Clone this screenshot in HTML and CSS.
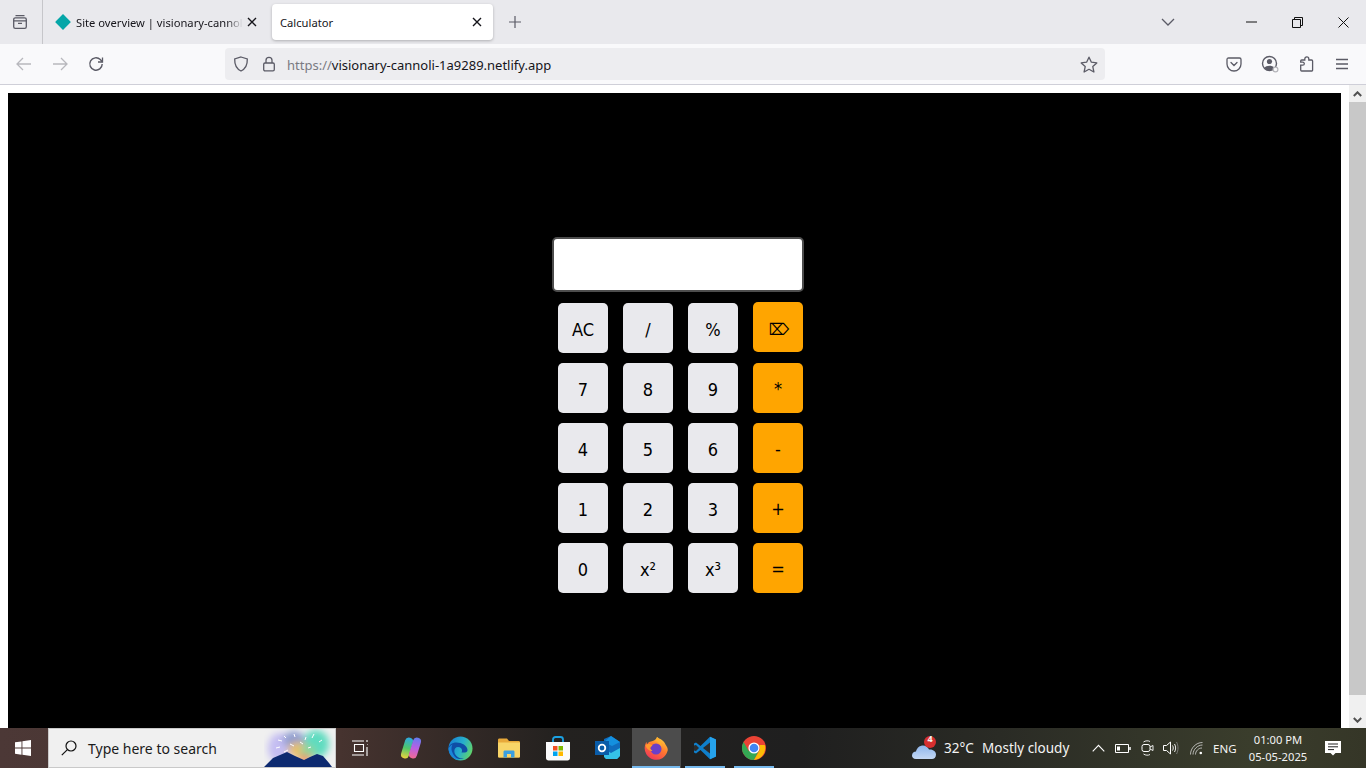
FILE: index.html
```html
<!DOCTYPE html>
<html lang="en">
<head>
<meta charset="utf-8">
<title>Calculator</title>
<link rel="stylesheet" href="styles.css">
</head>
<body>
<div class="tabstrip">
  <div class="tab-manager">
    <svg class="ico" width="16" height="16" viewBox="0 0 16 16" fill="none" stroke="#5b5b66" stroke-width="1.3"><path d="M3.5 1.7h9M1.7 5.5c0-1 .7-1.6 1.6-1.6h9.4c.9 0 1.6.6 1.6 1.6v7.2c0 1-.7 1.6-1.6 1.6H3.3c-.9 0-1.6-.6-1.6-1.6z"/><path d="M1.7 6.800h12.600M6 9.300h4"/></svg>
  </div>
  <div class="tab tab-idle">
    <svg class="tab-favicon" width="16" height="16" viewBox="0 0 16 16"><path d="M8 0l7.4 7.4a.9.9 0 0 1 0 1.2L8 16 .6 8.6a.9.9 0 0 1 0-1.2z" fill="#05a6a8"/></svg>
    <span class="tab-title">Site overview | visionary-cannoli</span>
    <svg class="tab-close" width="10" height="10" viewBox="0 0 10 10" stroke="#15141a" stroke-width="1.4"><path d="M1 1l8 8M9 1l-8 8"/></svg>
  </div>
  <div class="tab tab-active">
    <span class="tab-title">Calculator</span>
    <svg class="tab-close" width="10" height="10" viewBox="0 0 10 10" stroke="#15141a" stroke-width="1.4"><path d="M1 1l8 8M9 1l-8 8"/></svg>
  </div>
  <div class="new-tab">
    <svg width="14" height="14" viewBox="0 0 14 14" stroke="#5b5b66" stroke-width="1.2"><path d="M7 1v12M1 7h12"/></svg>
  </div>
  <div class="grow"></div>
  <div class="tabs-menu">
    <svg width="14" height="8" viewBox="0 0 14 8" fill="none" stroke="#5b5b66" stroke-width="1.3"><path d="M1 1l6 6 6-6"/></svg>
  </div>
  <div class="win-btn">
    <svg width="11" height="2" viewBox="0 0 11 2" stroke="#111" stroke-width="1"><path d="M0 1h11"/></svg>
  </div>
  <div class="win-btn">
    <svg width="11" height="11" viewBox="0 0 11 11" fill="none" stroke="#111" stroke-width="1"><path d="M.5 2.5h8v8h-8zM2.5 2.5V.5h8v8H8.500"/></svg>
  </div>
  <div class="win-btn">
    <svg width="11" height="11" viewBox="0 0 11 11" stroke="#111" stroke-width="1"><path d="M.5.5l10 10M10.500.5l-10 10"/></svg>
  </div>
</div>

<div class="toolbar">
  <div class="tool-btn">
    <svg width="16" height="14" viewBox="0 0 16 14" fill="none" stroke="#b8b8bd" stroke-width="1.3"><path d="M15 7H1.500M7 1L1 7l6 6"/></svg>
  </div>
  <div class="tool-btn">
    <svg width="16" height="14" viewBox="0 0 16 14" fill="none" stroke="#b8b8bd" stroke-width="1.3"><path d="M1 7h13.500M9 1l6 6-6 6"/></svg>
  </div>
  <div class="tool-btn">
    <svg width="16" height="16" viewBox="0 0 16 16" fill="none" stroke="#5b5b66" stroke-width="1.4"><path d="M14.200 8a6.200 6.200 0 1 1-1.900-4.500L14.500 6"/><path d="M14.500 1.500V6H10" stroke-width="1.300"/></svg>
  </div>
  <div class="urlbar">
    <svg class="url-shield" width="16" height="16" viewBox="0 0 16 16" fill="none" stroke="#5b5b66" stroke-width="1.3"><path d="M8 1l6.300 2c.2 5.500-1.800 9.800-6.300 12C3.500 12.800 1.500 8.500 1.700 3z"/></svg>
    <svg class="url-lock" width="14" height="16" viewBox="0 0 14 16" fill="none" stroke="#5b5b66" stroke-width="1.300"><rect x="1.700" y="7" width="10.600" height="7.800" rx="1.300"/><path d="M4 7V4.300a3 3 0 0 1 6 0V7"/></svg>
    <span class="url-text"><span class="url-dim">https://</span>visionary-cannoli-1a9289.netlify.app</span>
    <div class="grow"></div>
    <svg class="url-star" width="18" height="17" viewBox="0 0 18 17" fill="none" stroke="#5b5b66" stroke-width="1.300"><path d="M9 1.200l2.400 5 5.400.7-4 3.700 1.100 5.400L9 13.300 4.100 16l1.100-5.400-4-3.700 5.400-.7z" stroke-linejoin="round"/></svg>
  </div>
  <div class="grow"></div>
  <div class="tool-btn">
    <svg width="16" height="15" viewBox="0 0 16 15" fill="none" stroke="#5b5b66" stroke-width="1.300"><path d="M1 2.500C1 1.500 1.600 1 2.500 1h11c.9 0 1.500.5 1.500 1.500V7A7 7 0 0 1 1 7z"/><path d="M5 5.500l3 3 3-3" stroke-linecap="round"/></svg>
  </div>
  <div class="tool-btn">
    <svg width="18" height="18" viewBox="0 0 18 18" fill="none"><circle cx="8.500" cy="8.500" r="7" stroke="#5b5b66" stroke-width="1.400"/><circle cx="8.500" cy="6.500" r="2.600" fill="#5b5b66"/><path d="M3.500 13c1-3 9-3 10 0l-2 2h-6z" fill="#5b5b66"/><circle cx="14.500" cy="14.500" r="2.400" fill="#f9f9fb" stroke="#b5b5ba" stroke-width="1.200"/></svg>
  </div>
  <div class="tool-btn tool-ext">
    <svg width="16" height="16" viewBox="0 0 16 16" fill="none" stroke="#5b5b66" stroke-width="1.300"><path d="M1.700 9.200h2.100a1.500 1.500 0 0 0 0-3H1.700V5c0-.6.400-1 1-1h3.100V2.900a2 2 0 0 1 4 0V4h2.800c.6 0 1 .4 1 1v9.300c0 .4-.3.700-.7.700H2.700c-.6 0-1-.4-1-1z"/></svg>
  </div>
  <div class="tool-btn">
    <svg width="14" height="12" viewBox="0 0 14 12" stroke="#5b5b66" stroke-width="1.300"><path d="M1 1.500h12M1 6h12M1 10.500h12"/></svg>
  </div>
</div>

<div class="viewport">
  <main class="page">
    <div class="calc">
      <input class="display" type="text" aria-label="Result">
      <div class="keys">
        <button class="key">AC</button>
        <button class="key">/</button>
        <button class="key">%</button>
        <button class="key op op-top">&#x2326;</button>
        <button class="key">7</button>
        <button class="key">8</button>
        <button class="key">9</button>
        <button class="key op">*</button>
        <button class="key">4</button>
        <button class="key">5</button>
        <button class="key">6</button>
        <button class="key op">-</button>
        <button class="key">1</button>
        <button class="key">2</button>
        <button class="key">3</button>
        <button class="key op">+</button>
        <button class="key">0</button>
        <button class="key">x²</button>
        <button class="key">x³</button>
        <button class="key op">=</button>
      </div>
    </div>
  </main>
  <div class="scrollbar">
    <div class="scroll-arrow">
      <svg width="9" height="6" viewBox="0 0 9 6" fill="none" stroke="#505050" stroke-width="2"><path d="M.8 5l3.700-3.700L8.200 5"/></svg>
    </div>
    <div class="scroll-thumb"></div>
    <div class="grow"></div>
    <div class="scroll-arrow">
      <svg width="9" height="6" viewBox="0 0 9 6" fill="none" stroke="#505050" stroke-width="2"><path d="M.8 1l3.700 3.700L8.200 1"/></svg>
    </div>
  </div>
</div>

<footer class="taskbar">
  <div class="start">
    <svg width="16" height="16" viewBox="0 0 16 16" fill="#fff"><path d="M0 2.300l6.500-.9v6.200H0zM7.400 1.300L16 0v7.600H7.400zM0 8.500h6.500v6.200L0 13.700zM7.400 8.500H16V16l-8.600-1.200z"/></svg>
  </div>
  <div class="search">
    <svg class="search-glass" width="16" height="16" viewBox="0 0 16 16" fill="none" stroke="#111" stroke-width="1.200"><circle cx="10" cy="6" r="5"/><path d="M6.400 9.600L.8 15.200"/></svg>
    <span class="search-text">Type here to search</span>
    <svg class="search-art" width="71" height="39" viewBox="0 0 71 39">
      <defs>
        <filter id="soft" x="-20%" y="-20%" width="140%" height="140%"><feGaussianBlur stdDeviation="3.500"/></filter>
        <clipPath id="artClip"><rect width="71" height="39"/></clipPath>
      </defs>
      <g clip-path="url(#artClip)">
        <g filter="url(#soft)">
          <ellipse cx="16" cy="20" rx="12" ry="15" fill="#c4bdf2"/>
          <ellipse cx="52" cy="16" rx="13" ry="14" fill="#5fdcc0"/>
          <ellipse cx="30" cy="12" rx="11" ry="9" fill="#8f9dd0"/>
          <ellipse cx="34" cy="22" rx="10" ry="8" fill="#e9c06a"/>
          <ellipse cx="44" cy="24" rx="8" ry="7" fill="#8fd49a"/>
          <ellipse cx="41" cy="31" rx="7" ry="4" fill="#f5875a"/>
        </g>
        <path d="M0 39l9-9 7-3 7-3 8 4 9 4 6-3 7-3 6 2 6 7 3 4z" fill="#0d2a70"/>
        <g stroke="#fff" stroke-width="1"><path d="M14 12l4 1M20 8l2 2M30 6l1 3M12 20l4-1M26 16l4 2M42 9l-1 3M50 6l-2 4M36 14l3 2M44 20l3-1M20 24l4-2M55 14l3-2"/></g>
      </g>
    </svg>
  </div>
  <div class="task-cell task-view">
    <svg width="16" height="16" viewBox="0 0 16 16" fill="none" stroke="#fff" stroke-width="1.100"><path d="M0 1h12M2.500 4.500h9v7h-9zM0 15h12M15 0v2M15 4.500h.5M15 7v9" /></svg>
  </div>
  <div class="task-cell">
    <svg width="24" height="24" viewBox="0 0 24 24" fill="none" stroke-linecap="round" stroke-width="8">
      <defs>
        <linearGradient id="copA" gradientUnits="userSpaceOnUse" x1="10" y1="1" x2="5" y2="23"><stop offset="0" stop-color="#2aa8ea"/><stop offset=".5" stop-color="#4fc76a"/><stop offset="1" stop-color="#f6d23a"/></linearGradient>
        <linearGradient id="copB" gradientUnits="userSpaceOnUse" x1="19" y1="1" x2="14" y2="23"><stop offset="0" stop-color="#5c7ff0"/><stop offset=".5" stop-color="#b85fe4"/><stop offset="1" stop-color="#f36a8f"/></linearGradient>
      </defs>
      <path d="M10 5.500L6 18.500" stroke="url(#copA)"/>
      <path d="M18 5.500L14 18.500" stroke="url(#copB)"/>
    </svg>
  </div>
  <div class="task-cell">
    <svg width="25" height="25" viewBox="0 0 25 25">
      <defs>
        <linearGradient id="edgeA" x1="0" y1=".2" x2="1" y2=".6"><stop offset="0" stop-color="#1780d4"/><stop offset=".55" stop-color="#27b0cc"/><stop offset="1" stop-color="#62d46a"/></linearGradient>
      </defs>
      <circle cx="12.500" cy="12.500" r="12" fill="url(#edgeA)"/>
      <path d="M.5 13C.5 9 4 6.500 8.500 6.500c5 0 11 3 11 7.500 0 1.500-1 2.500-2.500 2.500h-3.500c1.500-3-.5-5.500-3.500-5.500-3.500 0-4.500 3.500-3 7 1.500 3 5 5 9 4.500a12 12 0 0 1-15.500-9.500z" fill="#0f4ea6"/>
      <path d="M.5 13c.5-2 2-3.500 4-4.500-1 2-1.500 4.500-.5 7 1 3.500 3.500 6.500 7 8.500A12 12 0 0 1 .5 13z" fill="#1a86d8"/>
    </svg>
  </div>
  <div class="task-cell">
    <svg width="22" height="20" viewBox="0 0 22 20">
      <path d="M0 2c0-1 .5-1.500 1.500-1.500H9L11 3h9.500c1 0 1.500.5 1.500 1.500V18c0 1-.5 1.500-1.500 1.500h-19C.5 19.500 0 19 0 18z" fill="#e8a93a"/>
      <path d="M0 4.500h22V18c0 1-.5 1.500-1.500 1.500h-19C.5 19.500 0 19 0 18z" fill="#f8d568"/>
      <path d="M5.500 19.500V14c0-1 .5-1.500 1.500-1.500h8c1 0 1.500.5 1.500 1.500v5.500h-3.500V16h-4v3.500z" fill="#3a9fe0"/>
    </svg>
  </div>
  <div class="task-cell">
    <svg width="24" height="25" viewBox="0 0 24 25">
      <path d="M7 7V3.500C7 2 8 1 9.500 1h5C16 1 17 2 17 3.500V7" fill="none" stroke="#1ba1e2" stroke-width="1.800"/>
      <path d="M0 6h24v16c0 1.500-1 2.500-2.500 2.500h-19C1 24.500 0 23.500 0 22z" fill="#fbfbfb"/>
      <rect x="7" y="10" width="4.500" height="4.500" fill="#f25022"/>
      <rect x="12.500" y="10" width="4.500" height="4.500" fill="#7fba00"/>
      <rect x="7" y="15.500" width="4.500" height="4.500" fill="#00a4ef"/>
      <rect x="12.500" y="15.500" width="4.500" height="4.500" fill="#ffb900"/>
    </svg>
  </div>
  <div class="task-cell">
    <svg width="25" height="24" viewBox="0 0 25 24">
      <path d="M9 3l7-3 9 6v14l-3 3H11l-2-3z" fill="#0f6cbd"/>
      <path d="M16 0l9 6-8 4-8-4z" fill="#1490df"/>
      <path d="M9 13l7 4 9-5v8l-3 3H11l-2-2z" fill="#35c1e8"/>
      <rect x="0" y="5" width="14" height="14" fill="#0a5ca8"/>
      <circle cx="7" cy="12" r="3.300" fill="none" stroke="#fff" stroke-width="1.800"/>
    </svg>
  </div>
  <div class="task-cell task-active">
    <svg width="24" height="24" viewBox="0 0 24 24">
      <defs>
        <linearGradient id="foxA" x1=".8" y1="0" x2=".2" y2="1"><stop offset="0" stop-color="#ffd53a"/><stop offset=".45" stop-color="#ff7a2e"/><stop offset="1" stop-color="#f0325c"/></linearGradient>
      </defs>
      <path d="M13 1c2.500 2 7 3 8.500 7.500C24 12 24 14 23.500 15A11.500 11.500 0 1 1 1 9.500C1.300 8 2 6.500 2.500 6l.5 2.500C4 6.500 5.500 5.500 7 5.500 9 5 12 4 13 1z" fill="url(#foxA)"/>
      <circle cx="12" cy="13" r="5.500" fill="#6a3fc8"/>
      <path d="M1.500 9c2-1.500 5-1.500 7 .5l-3 2.500 3 3c-3 0-6-2-7-6z" fill="#ff9a2e"/>
      <path d="M13 1c3 2.500 5 6 4.500 10-1-3-3-5-6-6.500 1-1 1.500-2.300 1.500-3.500z" fill="#ffb02e"/>
    </svg>
  </div>
  <div class="task-cell task-open">
    <svg width="24" height="24" viewBox="0 0 24 24">
      <path d="M17 .8L7.500 10 3 6.500 1 7.500v9l2 1L7.500 14l9.500 9.200 6-2.700V3.500z" fill="#0f7fcb"/>
      <path d="M17 .8l6 2.700v17l-6 2.700z" fill="#26a3ec"/>
      <path d="M17 6.500L10 12l7 5.500z" fill="#2b2b2b"/>
      <path d="M1 9.500L3 9l3 3-3 3-2-.5z" fill="#2b2b2b"/>
    </svg>
  </div>
  <div class="task-cell task-open">
    <svg width="24" height="24" viewBox="0 0 24 24">
      <circle cx="12" cy="12" r="12" fill="#ea4335"/>
      <path d="M12 24A12 12 0 0 1 1.600 6l5.200 9 5 0 4.800 0-4.600 9z" fill="#34a853"/>
      <path d="M12 24l5.200-9a6 6 0 0 0 .0-6H22.800A12 12 0 0 1 12 24z" fill="#fbbc05"/>
      <circle cx="12" cy="12" r="5.600" fill="#fff"/>
      <circle cx="12" cy="12" r="4.300" fill="#4285f4"/>
    </svg>
  </div>
  <div class="grow"></div>
  <div class="tray">
    <svg class="tray-weather" width="25" height="24" viewBox="0 0 25 24">
      <defs><linearGradient id="cloud" x1="0" y1="0" x2="0" y2="1"><stop offset="0" stop-color="#8fb6ec"/><stop offset="1" stop-color="#c4d8f4"/></linearGradient></defs>
      <path d="M4 23c-3 0-4-2-4-3.500C0 17 2 15.500 4 15.500c1-4 4-6 7-6 3 0 5 2 6 4 4-.5 7 2 7 5 0 3-2 4.500-4 4.500z" fill="url(#cloud)"/>
      <circle cx="18" cy="6" r="6" fill="#d62f2f"/>
    </svg>
    <span class="tray-badge">4</span>
    <span class="tray-temp">32°C</span>
    <span class="tray-cond">Mostly cloudy</span>
    <svg class="tray-chev" width="13" height="8" viewBox="0 0 13 8" fill="none" stroke="#fff" stroke-width="1.100"><path d="M.7 7.300l5.800-6 5.800 6"/></svg>
    <svg class="tray-batt" width="16" height="9" viewBox="0 0 16 9" fill="none" stroke="#fff"><path d="M.5.5h13v8H.5z"/><path d="M2 2.500h3v4H2z" fill="#fff" stroke="none"/><path d="M15 3v3" stroke-width="1.500"/></svg>
    <svg class="tray-cam" width="13" height="16" viewBox="0 0 13 16" fill="none" stroke="#fff"><rect x="1" y="4.500" width="8" height="7" rx="2"/><path d="M9 7l3-1.500v5L9 9M2.500 2c2-1.500 5-1.500 6.500-.5M2.500 14c2 1.500 5 1.500 6.500.5" stroke-width=".9"/></svg>
    <svg class="tray-vol" width="16" height="14" viewBox="0 0 16 14" fill="none" stroke="#fff"><path d="M.5 4.500h3l4-3.500v12l-4-3.500h-3z"/><path d="M9.500 4.500c1 1.500 1 3.500 0 5M11.500 3c1.500 2.500 1.500 5.500 0 8" stroke-width=".9"/><path d="M13.500 1c2 3.500 2 8.500 0 12" stroke="#8a8a8a" stroke-width=".8"/></svg>
    <svg class="tray-wifi" width="13" height="13" viewBox="0 0 13 13" fill="none" stroke="#d8d8d8"><path d="M.5 12.500C.5 6 6 .5 12.500.5M3 12.500C3 7.500 7.500 3 12.500 3" stroke-width=".8"/><path d="M5.500 12.500c0-3.500 3-6.500 6.500-6.500" stroke-width=".8"/><circle cx="10.800" cy="11" r="1.300" fill="#fff" stroke="none"/></svg>
    <span class="tray-lang">ENG</span>
    <div class="tray-clock"><span>01:00 PM</span><span>05-05-2025</span></div>
    <svg class="tray-notif" width="16" height="15" viewBox="0 0 16 15" fill="#fff"><path d="M0 0h16v12h-5.500L8 14.500 5.500 12H0z"/><path d="M3 3h10M3 5.800h10M3 8.600h6" stroke="#222" stroke-width="1"/></svg>
  </div>
</footer>
</body>
</html>
```
FILE: styles.css
```css
* { box-sizing: border-box; }
html, body { margin: 0; height: 100%; }
body {
  display: flex;
  flex-direction: column;
  height: 100vh;
  overflow: hidden;
  font-family: "Noto Sans", "Open Sans", sans-serif;
  background: #fff;
}
svg { display: block; flex: none; }
.grow { flex: 1 1 auto; }

/* tab strip */
.tabstrip {
  display: flex;
  height: 44px;
  flex: none;
  background: #e9e9ed;
  color: #15141a;
}
.tab-manager {
  width: 43px;
  border-right: 1px solid #c6c6ca;
  display: flex;
  align-items: center;
  justify-content: center;
  padding-right: 3px;
}
.tab {
  display: flex;
  align-items: center;
  height: 36px;
  margin-top: 4px;
  font-size: 11.200px;
}
.tab-idle { width: 225px; padding-left: 12px; }
.tab-favicon { margin-right: 5px; }
.tab-title {
  flex: 1;
  min-width: 0;
  white-space: nowrap;
  overflow: hidden;
}
.tab-idle .tab-title {
  -webkit-mask-image: linear-gradient(to right, #000 90%, transparent 100%);
  mask-image: linear-gradient(to right, #000 90%, transparent 100%);
}
.tab-close { margin: 0 11px 0 4px; }
.tab-active {
  width: 221px;
  margin-left: 4px;
  padding-left: 8px;
  background: #fff;
  border-radius: 4px;
  box-shadow: 0 1px 3px rgba(0, 0, 0, .25);
}
.new-tab {
  width: 44px;
  display: flex;
  align-items: center;
  justify-content: center;
}
.tabs-menu {
  width: 44px;
  margin-right: 37px;
  padding-right: 2px;
  display: flex;
  align-items: center;
  justify-content: center;
}
.win-btn {
  width: 46px;
  display: flex;
  align-items: center;
  justify-content: center;
}

/* toolbar */
.toolbar {
  display: flex;
  align-items: center;
  flex: none;
  height: 41px;
  padding: 0 6px;
  background: #f9f9fb;
  border-bottom: 1px solid #cfcfd8;
}
.tool-btn {
  width: 36px;
  height: 32px;
  display: flex;
  align-items: center;
  justify-content: center;
}
.tool-ext { padding-left: 1px; }
.urlbar {
  display: flex;
  align-items: center;
  width: 880px;
  height: 32px;
  margin-left: 111px;
  padding: 0 7px 0 8px;
  background: #ededf0;
  border-radius: 4px;
}
.url-shield { margin-right: 13px; }
.url-lock { margin-right: 11px; }
.url-text { font-size: 13px; color: #15141a; white-space: nowrap; padding-top: 1px; }
.url-dim { color: #7a7a82; }

/* page */
.viewport {
  flex: 1;
  min-height: 0;
  display: flex;
  background: #fff;
}
.page {
  flex: 1;
  margin: 8px 8px 0;
  padding: 144px 0 0 8px;
  background: #000;
  display: flex;
  justify-content: center;
  align-items: flex-start;
}
.calc { width: 251px; }
.display {
  display: block;
  width: 252px;
  height: 55px;
  margin-left: -1px;
  padding: 0;
  border: 2px solid #4d4d4d;
  border-radius: 5px;
  background: #fff;
}
.keys {
  display: grid;
  grid-template-columns: repeat(4, 50px);
  grid-auto-rows: 50px;
  gap: 10px 15px;
  margin: 11px 0 0 5px;
}
.key {
  padding: 3px 0 0;
  border: 0;
  border-radius: 5px;
  background: #e9e9ed;
  color: #000;
  font: 18px/1 "DejaVu Sans Condensed", "DejaVu Sans", sans-serif;
}
.op { background: #ffa500; padding-top: 2px; }
.op-top { margin: -1px 0 1px; font-size: 16px; padding: 5px 0 0 2px; }

/* scrollbar */
.scrollbar {
  width: 17px;
  flex: none;
  display: flex;
  flex-direction: column;
  background: #f0f0f0;
}
.scroll-arrow {
  height: 17px;
  display: flex;
  align-items: center;
  justify-content: center;
  flex: none;
}
.scroll-thumb { flex: none; height: 593px; background: #c8c8c8; }

/* taskbar */
.taskbar {
  display: flex;
  align-items: stretch;
  flex: none;
  height: 40px;
  color: #fff;
  background: linear-gradient(to right, #4c3836 0, #46332f 340px, #23211f 560px, #1f1f1f 800px, #2a2b25 1000px, #3a3d2c 1250px, #353627 1366px);
}
.start {
  width: 48px;
  display: flex;
  align-items: center;
  justify-content: center;
  padding-right: 2px;
}
.search {
  width: 288px;
  display: flex;
  align-items: center;
  padding-left: 12px;
  background: #f0f0f0;
  border: 1px solid #c9c9c9;
  color: #1b1b1b;
  overflow: hidden;
}
.search-glass { margin-right: 11px; }
.search-text { flex: 1; font-size: 14px; white-space: nowrap; }
.search-art { align-self: flex-end; }
.task-cell {
  width: 49px;
  display: flex;
  align-items: center;
  justify-content: center;
  padding-right: 1px;
  position: relative;
}
.task-view { width: 51px; padding-right: 3px; }
.task-active { background: #4c4c4c; }
.task-active::after,
.task-open::after {
  content: "";
  position: absolute;
  left: 4px;
  right: 5px;
  bottom: 0;
  height: 2px;
  background: #76b9ed;
}
.task-active::after { left: 0; right: 1px; }

.tray {
  position: relative;
  display: flex;
  align-items: center;
  width: 587px;
  font-size: 13.500px;
  color: #f4f4f4;
  white-space: nowrap;
}
.tray-weather { margin-left: 133px; }
.tray-badge {
  position: absolute;
  left: 146px;
  top: 5px;
  font-size: 9px;
  line-height: 12px;
  width: 10px;
  text-align: center;
  font-weight: 700;
}
.tray-temp { margin-left: 7px; width: 38px; }
.tray-cond { width: 110px; }
.tray-chev { margin-right: 10px; }
.tray-batt { margin-right: 10px; }
.tray-cam { margin-right: 9px; }
.tray-vol { margin-right: 11px; }
.tray-wifi { margin-right: 10px; }
.tray-lang { font-size: 11.500px; width: 36px; }
.tray-clock {
  display: flex;
  flex-direction: column;
  align-items: center;
  width: 58px;
  font-size: 11.200px;
  line-height: 17px;
  margin-right: 18px;
}
```
